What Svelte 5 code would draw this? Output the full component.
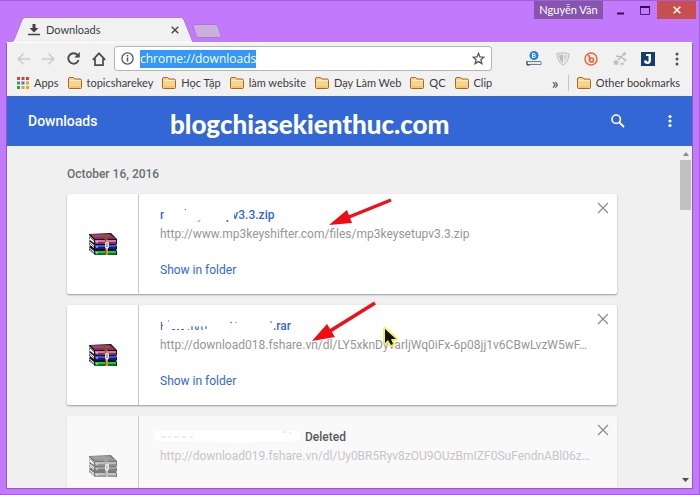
<script>
  import { onMount } from 'svelte';

  let address = $state('chrome://downloads');
  let addressBox;

  const bookmarks = ['topicsharekey', 'Học Tập', 'làm website', 'Dạy Làm Web', 'QC', 'Clip'];
  const appColors = ['#d8432f', '#d8432f', '#d8432f', '#2f9e58', '#3b7de0', '#e8a61c', '#2f9e58', '#e8a61c', '#e8a61c'];

  const items = [
    { name: 'mp3keysetupv3.3.zip', smear: 'first', url: 'http://www.mp3keyshifter.com/files/mp3keysetupv3.3.zip' },
    { name: '.rar', smear: 'second', url: 'http://download018.fshare.vn/dl/LY5xknDyvarljWq0iFx-6p08jj1v6CBwLvzW5wF…' },
    { name: '', smear: 'third', deleted: true, url: 'http://download019.fshare.vn/dl/Uy0BR5Ryv8zOU9OUzBmIZF0SuFendnABl06z…' }
  ];

  onMount(() => {
    addressBox.focus();
    addressBox.select();
  });
</script>

{#snippet folder()}
  <svg class="folder" width="14" height="12" viewBox="0 0 14 12" aria-hidden="true">
    <path d="M.5 10.5V2Q.5.5 2 .5h3.500l1.500 1.500h5Q13.500 2 13.500 3.500v7q0 1-1 1h-11q-1 0-1-1z" fill="#f9d48a" stroke="#9c6b2c" />
    <path d="M1.500 3.500h11" stroke="#fff0c4" />
    <path d="M1.500 10h11" stroke="#eeb55c" />
  </svg>
{/snippet}

{#snippet archive(grey)}
  <svg class:grey width="30" height="23" viewBox="0 0 30 23" aria-hidden="true">
    <path d="M1 1l22-1 6 6v5l-1 1 1 1v3l-1 1 1 1v4H7L1 17v-3l1-1-1-2V8l1-1-1-2z" fill="#171019" />
    <path d="M2 1h20l6 5H7z" fill="#8c2f62" /><path d="M4 2h17l2 2H6z" fill="#a2456f" />
    <path d="M7 7h21v3H7z" fill="#d474b4" /><path d="M7 9h21v2H7z" fill="#81305f" />
    <path d="M7 12h21v2H7z" fill="#3159e4" /><path d="M7 14h21v2H7z" fill="#101b93" />
    <path d="M7 18h21v2H7z" fill="#24c53b" /><path d="M7 20h21v2H7z" fill="#08731b" />
    <path d="M1 2l5 5v3L2 7zM1 8l5 4v3l-4-3zM1 14l5 4v3l-4-4z" fill="#f4f2ec" />
    <path d="M2 4l4 4M2 10l4 4M2 16l4 4" stroke="#777" />
    <path d="M9 8v2M9 13v2M9 19v2" stroke="#f1d9ee" />
    <path d="M13 1h4l3 6v15h-3V7z" fill="#8d5022" /><path d="M18 7h2v15h-2z" fill="#d19145" />
    <path d="M17.500 9.500h3v5h-3z" fill="#55585a" stroke="#e3dfa5" /><path d="M19 10v6" stroke="#fff" />
  </svg>
{/snippet}

<div class="window">
  <header class="titlebar">
    <div class="tab">
      <svg class="tab-shape" viewBox="0 0 184 26" preserveAspectRatio="none" aria-hidden="true">
        <path d="M0 25.500Q3 25 4 23L12 3Q13 .5 15 .5H171Q173 .5 174 3L182 23Q182 25 184 25.500V26H0z" fill="#f2f1f2" stroke="#a983c6" />
        <path d="M0 25.500h184" stroke="#f2f1f2" />
      </svg>
      <svg width="12" height="12" viewBox="0 0 12 12" aria-hidden="true">
        <path d="M4.500 0h3v4h3L6 8.500 1.500 4h3z" fill="#444" /><path d="M0 10.500h12" stroke="#444" stroke-width="1.500" />
      </svg>
      <span class="tab-title">Downloads</span>
      <button class="plain" aria-label="Close tab">
        <svg width="8" height="8" viewBox="0 0 8 8"><path d="M.7.7l6.600 6.600M7.300.7L.7 7.300" stroke="#4c4c4c" stroke-width="1.500" /></svg>
      </button>
    </div>
    <button class="plain new-tab" aria-label="New tab">
      <svg width="30" height="14" viewBox="0 0 30 14"><path d="M2.500.5H23q2 0 3 2l3 9q.5 2-1.500 2H7q-2 0-3-2L1 2Q.5.5 2.500.5z" fill="#c9b1dc" stroke="#a876d3" /></svg>
    </button>
    <div class="window-controls">
      <button class="user">Nguyễn Văn</button>
      <button class="plain win" aria-label="Minimize"><svg width="8" height="10" viewBox="0 0 8 10"><path d="M0 8.500h7" stroke="#32104a" stroke-width="2" /></svg></button>
      <button class="plain win" aria-label="Maximize"><svg width="10" height="9" viewBox="0 0 10 9"><path d="M.5 1h9v7.500h-9zM0 1h10" fill="none" stroke="#4b2068" /><path d="M0 1h10" stroke="#32104a" stroke-width="2" /></svg></button>
      <button class="plain close" aria-label="Close"><svg width="8" height="8" viewBox="0 0 8 8"><path d="M.7.7l6.600 6.600M7.300.7L.7 7.300" stroke="#fff" stroke-width="1.600" /></svg></button>
    </div>
  </header>

  <div class="browser">
    <nav class="toolbar" aria-label="Navigation">
      <button class="plain" aria-label="Back"><svg width="13" height="12" viewBox="0 0 13 12"><path d="M6.500.8L1.200 6l5.300 5.200M1.500 6H13" fill="none" stroke="#ccc" stroke-width="1.600" /></svg></button>
      <button class="plain" aria-label="Forward"><svg width="13" height="12" viewBox="0 0 13 12"><path d="M6.500.8L11.800 6l-5.300 5.200M11.500 6H0" fill="none" stroke="#ccc" stroke-width="1.600" /></svg></button>
      <button class="plain" aria-label="Reload"><svg width="13" height="13" viewBox="0 0 13 13"><path d="M10.600 3.200A5.200 5.200 0 1 0 11.500 8" fill="none" stroke="#4a4a4a" stroke-width="1.900" /><path d="M12.800 0v5.500H7.300z" fill="#4a4a4a" /></svg></button>
      <button class="plain" aria-label="Home"><svg width="14" height="14" viewBox="0 0 14 14"><path d="M.8 7.800L7 1.300l6.200 6.500M3 6.500v6.700h8V6.500" fill="none" stroke="#4a4a4a" stroke-width="1.700" /></svg></button>
      <div class="omnibox">
        <svg width="13" height="13" viewBox="0 0 13 13" aria-hidden="true"><circle cx="6.500" cy="6.500" r="5.600" fill="none" stroke="#555" stroke-width="1.300" /><path d="M6.500 5.500v4M6.500 3v1.500" stroke="#555" stroke-width="1.500" /></svg>
        <input bind:this={addressBox} bind:value={address} aria-label="Address" spellcheck="false" />
        <button class="plain" aria-label="Bookmark this page"><svg width="13" height="13" viewBox="0 0 13 13"><path d="M6.500 1.300l1.500 3.600 3.900.3-3 2.600 1 3.800-3.400-2-3.400 2 1-3.800-3-2.600 3.900-.3z" fill="none" stroke="#555" stroke-width="1.300" /></svg></button>
      </div>
      <div class="extensions">
        <button class="plain" aria-label="Page rank"><svg width="16" height="15" viewBox="0 0 16 15"><circle cx="8" cy="4.500" r="4.500" fill="#2b80dc" /><path d="M6.500 2.500h2q1.500 1 0 2h-2h2.500q1 1.500-.5 2h-2z" fill="none" stroke="#fff" /><path d="M1 10.500h14v3H1z" fill="#fff" stroke="#6d7f98" /><path d="M1 10v4h3" fill="none" stroke="#20457c" /><path d="M4 11.500v1M6 11.500v1M8 11.500v1M10 11.500v1M12 11.500v1" stroke="#8ba0bb" /></svg></button>
        <button class="plain" aria-label="Shield"><svg width="14" height="14" viewBox="0 0 14 14"><path d="M1 1.500L7 .7l6 .8q0 8-6 11.800Q1 9.500 1 1.500z" fill="#e8e8e8" stroke="#bcbcbc" /><path d="M3 3l4-.5V11Q3 8 3 3z" fill="#bdbdbd" /><path d="M8 4h3M8 6h2.500" stroke="#bbb" /></svg></button>
        <button class="plain" aria-label="Bitly"><svg width="14" height="14" viewBox="0 0 14 14"><circle cx="7" cy="7" r="6" fill="#fff1ea" stroke="#e9653b" stroke-width="1.500" /><path d="M4 3.500q1.500 0 1.500 1.500v3" fill="none" stroke="#e9653b" stroke-width="1.700" /><circle cx="7.500" cy="8" r="2" fill="none" stroke="#e9653b" stroke-width="1.700" /></svg></button>
        <button class="plain" aria-label="Connections"><svg width="15" height="14" viewBox="0 0 15 14"><path d="M4 4l5 1 4-4M9 5l4 3M9 5L6 8" fill="none" stroke="#bdbdbd" stroke-width="1.500" /><circle cx="12.500" cy="1.800" r="1.500" fill="#bbb" /><circle cx="13" cy="8" r="1.500" fill="#c4c4c4" /><path d="M4 7l1.200 2 2.300.3-1.700 1.700.5 2.500L4 12.300l-2.300 1.200.5-2.500L.5 9.300 2.800 9z" fill="#c0c0c0" /><path d="M10 9.500l1 1.500h1.500l-1 1.200.3 1.300-1.800-.7-1.500.7.2-1.500-1-1h1.600z" fill="#c7c7c7" /></svg></button>
        <button class="plain" aria-label="Downloader"><svg width="14" height="14" viewBox="0 0 14 14"><path d="M0 0h14v14H0z" fill="#113d70" /><path d="M5 2h5v6q0 4-3.500 4T3 8.500h2.500q.5 1.500 1.500 1T7.500 8V4H5z" fill="#fff" /></svg></button>
        <button class="plain" aria-label="Menu"><svg width="4" height="14" viewBox="0 0 4 14" fill="#505050"><circle cx="2" cy="2" r="1.500" /><circle cx="2" cy="7" r="1.500" /><circle cx="2" cy="12" r="1.500" /></svg></button>
      </div>
    </nav>

    <nav class="bookmarks" aria-label="Bookmarks">
      <a href="#apps">
        <svg width="12" height="12" viewBox="0 0 12 12" aria-hidden="true">
          {#each appColors as color, i}
            <rect x={(i % 3) * 4.5} y={Math.floor(i / 3) * 4.5} width="3" height="3" fill={color} />
          {/each}
        </svg>
        Apps
      </a>
      {#each bookmarks as title}
        <a href="#bookmark">{@render folder()}{title}</a>
      {/each}
      <button class="plain more" aria-label="More bookmarks">»</button>
      <a class="other" href="#other">{@render folder()}Other bookmarks</a>
    </nav>

    <main>
      <div class="appbar">
        <h1>Downloads</h1>
        <span class="watermark">blogchiasekienthuc.com</span>
        <button class="plain" aria-label="Search"><svg width="14" height="14" viewBox="0 0 14 14"><circle cx="5.200" cy="5.200" r="4.200" fill="none" stroke="#fff" stroke-width="1.600" /><path d="M8.300 8.300l4.700 4.700" stroke="#fff" stroke-width="1.900" /></svg></button>
        <button class="plain" aria-label="More actions"><svg width="4" height="14" viewBox="0 0 4 14" fill="#fff"><circle cx="2" cy="2.500" r="1.600" /><circle cx="2" cy="7" r="1.600" /><circle cx="2" cy="11.500" r="1.600" /></svg></button>
      </div>

      <div class="body">
        <div class="scroll">
          <div class="list">
            <h2>October 16, 2016</h2>
            {#each items as item}
              <article class:deleted={item.deleted}>
                <div class="thumb">{@render archive(item.deleted)}</div>
                <div class="details">
                  <div class="name">
                    {#if item.smear === 'first'}
                      <a href="#file">{item.name}</a>
                      <svg class="cover" width="76" height="18" viewBox="0 0 76 18" aria-hidden="true">
                        <path d="M4 0h14v4h8v-1h10v2h18V0h22l-3 14h-8v2h-2v-3H41l-5 4-3-3H14v3h-3v-3H4z" fill="#fff" />
                      </svg>
                    {:else if item.smear === 'second'}
                      <svg width="113" height="14" viewBox="0 0 113 14" aria-hidden="true" fill="none" stroke="#3f6fcf">
                        <path d="M1.500 3v8M2 6.500h1M8 2h1M12 10.500h3M17 10.500h2M21 10.500h3M28 10.500h1M32 7v4M36 7.500q-1 3 1 3t1-3M42 7.500q-1 3 1 3M46 7v3" stroke-width="1.200" />
                        <path d="M70 3l2 1M76 3v1M110 3h2" />
                      </svg><a href="#file">{item.name}</a>
                    {:else}
                      <svg class="wipe" width="148" height="16" viewBox="0 0 148 16" aria-hidden="true">
                        <path d="M0 2h78l2-1 2 1h64v9q-14 2-30 1l-26 2q-12-1-20-1l-68-1z" fill="#fff" />
                        <path d="M7 8h5M14 8h3M20 8h5M28 8h4M36 8h3M129 3h4M135 4h2" stroke="#ddd" />
                      </svg><span class="status">Deleted</span>
                    {/if}
                  </div>
                  <div class="url">{item.url}</div>
                  {#if !item.deleted}
                    <a class="show" href="#folder">Show in folder</a>
                  {/if}
                </div>
                <button class="plain remove" aria-label="Remove from list"><svg width="12" height="12" viewBox="0 0 12 12"><path d="M1 1l10 10M11 1L1 11" stroke="#8c8c8c" stroke-width="1.200" /></svg></button>
              </article>
            {/each}
          </div>
        </div>
        <div class="scrollbar" aria-hidden="true">
          <svg width="6" height="4" viewBox="0 0 6 4"><path d="M0 4l3-4 3 4z" fill="#8b8b8b" /></svg>
          <div class="grip"></div>
          <svg class="down" width="7" height="4" viewBox="0 0 7 4"><path d="M0 0h7L3.500 4z" fill="#4c4c4c" /></svg>
        </div>
      </div>
    </main>
  </div>

  <svg class="marks" width="700" height="495" viewBox="0 0 700 495" aria-hidden="true">
    <path d="M391 200L349 217" stroke="#ee1118" stroke-width="3.500" />
    <path d="M329 225l18-15 5 13z" fill="#f00c12" />
    <path d="M375 303l-45 28" stroke="#ee1118" stroke-width="3.500" />
    <path d="M312 341l15-17 8 13z" fill="#f00c12" />
    <path d="M385 329v14l3-3 3 5 2-1-2-5h5z" fill="#eef03f" stroke="#eef03f" stroke-width="4" stroke-linejoin="round" opacity=".8" />
    <path d="M385 329v14l3-3 3 5 2-1-2-5h5z" fill="#111" />
  </svg>
</div>

<style>
  :global(body) { margin: 0; }
  .window {
    box-sizing: border-box;
    position: relative;
    display: flex;
    flex-direction: column;
    height: 100vh;
    padding: 0 6px 5px;
    overflow: hidden;
    background: #c279fb;
    border: 1px solid #a05fd2;
    border-width: 1px 1px 1px 0;
    font: 12px/16px Lato, "Noto Sans", sans-serif;
    color: #3c3c3c;
  }
  a { color: inherit; text-decoration: none; }
  svg { display: block; flex: none; }
  .plain {
    display: flex;
    align-items: center;
    justify-content: center;
    padding: 0;
    border: 0;
    background: none;
    font: inherit;
    color: inherit;
  }
  .titlebar { display: flex; height: 41px; flex: none; align-items: flex-end; }
  .tab {
    position: relative;
    display: flex;
    align-items: center;
    box-sizing: border-box;
    width: 184px;
    height: 25px;
    margin-left: 4px;
    padding: 0 15px 0 18px;
    gap: 6px;
    font-size: 11px;
  }
  .tab > * { position: relative; }
  .tab > .tab-shape { position: absolute; left: 0; top: 0; width: 100%; height: 26px; }
  .tab-title { flex: 1; }
  .new-tab { margin-bottom: 4px; margin-left: -2px; }
  .window-controls { display: flex; align-self: flex-start; margin-left: auto; margin-right: -3px; height: 18px; }
  .user {
    width: 69px;
    margin-right: 6px;
    padding: 0;
    border: 0;
    background: #8655ae;
    color: #fff;
    font: inherit;
    font-size: 11px;
    line-height: 18px;
  }
  .win { width: 24px; }
  .close { width: 39px; background: #c74f50; }

  .browser {
    display: flex;
    flex-direction: column;
    flex: 1;
    min-height: 0;
    border: 1px solid #8f5abb;
    border-top-color: #fff;
    background: #f2f1f2;
    position: relative;
    z-index: 0;
  }
  .toolbar { display: flex; align-items: center; gap: 12px; height: 31px; padding: 0 13px 0 10px; }
  .omnibox {
    display: flex;
    align-items: center;
    box-sizing: border-box;
    flex: 1;
    height: 25px;
    margin-left: -4px;
    padding: 0 6px;
    gap: 6px;
    background: #fff;
    border: 1px solid #b5b5b5;
    border-radius: 3px;
  }
  input {
    flex: 1;
    min-width: 0;
    padding: 0;
    border: 0;
    outline: 0;
    background: none;
    color: #333;
    font: 12px/18px "Open Sans", "Noto Sans", sans-serif;
  }
  input::selection { background: #3296fb; color: #fff; }
  .extensions { display: flex; align-items: center; gap: 14px; margin-left: 22px; }
  .extensions button:last-child { margin-left: 6px; }

  .bookmarks { display: flex; align-items: center; gap: 9px; height: 18px; padding: 0 12px 4px 10px; white-space: nowrap; font-size: 11px; }
  .bookmarks a { display: flex; align-items: center; gap: 5px; }
  .more { margin-left: auto; font-size: 16px; }
  .bookmarks .other { border-left: 1px solid #c6c6c6; padding-left: 8px; }

  main { display: flex; flex-direction: column; flex: 1; min-height: 0; font-family: Roboto, sans-serif; }
  .appbar {
    position: relative;
    display: flex;
    align-items: center;
    height: 50px;
    flex: none;
    padding: 0 20px 0 21px;
    gap: 43px;
    background: #3367d6;
    color: #fff;
  }
  h1 { flex: 1; margin: 0; font-size: 14px; font-weight: 500; }
  .watermark { position: absolute; left: 163px; top: 12px; font: 900 26px/32px Lato, sans-serif; }
  .body { display: flex; flex: 1; min-height: 0; background: #f0f0f0; }
  .scroll { flex: 1; min-width: 0; overflow: hidden; }
  .list { max-width: 550px; margin: 0 auto; }
  h2 { margin: 0; padding: 20px 0 12px; font-size: 12px; line-height: 16px; font-weight: 500; color: #6b6f73; }
  article {
    display: flex;
    position: relative;
    height: 100px;
    margin-bottom: 11px;
    border-radius: 2px;
    background: #fff;
    box-shadow: 0 1px 2px #999;
  }
  .thumb { display: flex; align-items: center; justify-content: center; width: 71px; flex: none; border-right: 1px solid #c8c8c8; }
  .details { flex: 1; min-width: 0; padding: 12px 24px 0 21px; }
  .name { position: relative; display: flex; align-items: center; height: 18px; font-weight: 500; color: #3367d6; }
  .cover { position: absolute; left: 0; top: 0; }
  .wipe { margin-left: -6px; margin-right: 3px; }
  .status { color: #5a5a5a; }
  .url { line-height: 20px; color: #969696; overflow: hidden; text-overflow: ellipsis; white-space: nowrap; }
  .show { display: inline-block; margin-top: 18px; color: #3367d6; }
  .remove { position: absolute; top: 8px; right: 8px; }
  .deleted { background: #f9f9f9; box-shadow: 0 1px 2px #ccc; }
  .deleted .url { color: #c6c6c6; }
  .grey { filter: grayscale(1); opacity: .55; }
  .scrollbar { display: flex; flex-direction: column; align-items: center; width: 15px; padding: 6px 1px 6px 3px; box-sizing: border-box; }
  .grip { width: 11px; height: 50px; margin-top: 4px; background: #c1c1c1; }
  .down { margin-top: auto; }
  .marks { position: absolute; left: 0; top: -1px; pointer-events: none; z-index: 1; }
</style>
